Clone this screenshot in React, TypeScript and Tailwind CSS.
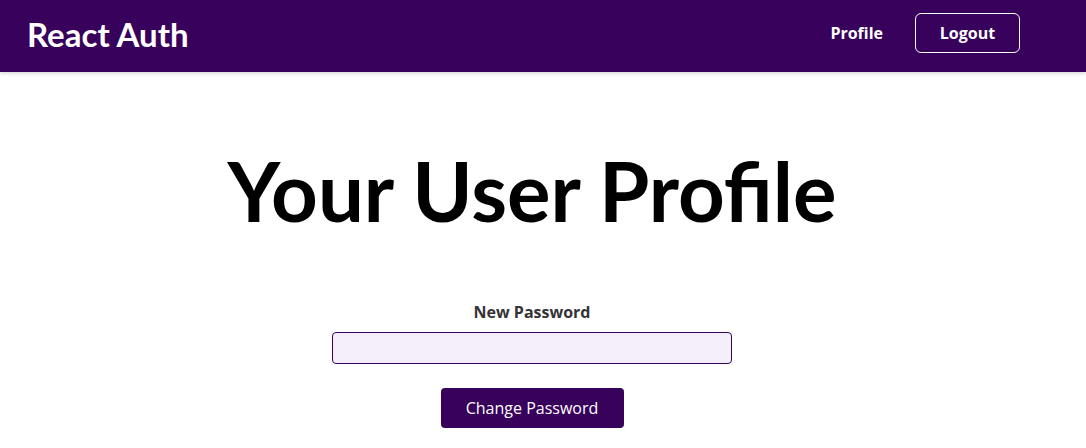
import { useState } from 'react';

export default function App() {
    const [password, setPassword] = useState('');

    return (
        <div className="min-h-screen bg-white font-['Open_Sans',sans-serif]">
            {/* Header */}
            <header className="flex h-[72px] w-full items-center justify-between bg-[#38015c] pl-[27px] pr-[66px] shadow-[0_1px_4px_rgba(0,0,0,0.2)]">
                <div className="mb-[2px] font-['Lato',sans-serif] text-[33px] font-bold text-white">React Auth</div>
                <nav className="mb-[6px]">
                    <ul className="flex items-center gap-8">
                        <li>
                            <a href="#" className="text-base font-bold text-white">
                                Profile
                            </a>
                        </li>
                        <li>
                            <button className="h-10 w-[105px] rounded-md border border-white bg-transparent text-base font-bold text-white">
                                Logout
                            </button>
                        </li>
                    </ul>
                </nav>
            </header>

            {/* Profile */}
            <main className="pr-[22px] text-center">
                <h1 className="mt-[71px] font-['Lato',sans-serif] text-[81.5px] leading-[96px] font-bold text-black">
                    Your User Profile
                </h1>
                <form className="mx-auto mt-[61px] w-[400px]" onSubmit={(e) => e.preventDefault()}>
                    <div className="flex flex-col items-center">
                        <label htmlFor="new-password" className="mb-[8px] text-base font-bold text-[#353336]">
                            New Password
                        </label>
                        <input
                            id="new-password"
                            type="password"
                            value={password}
                            onChange={(e) => setPassword(e.target.value)}
                            className="h-8 w-full rounded border border-[#38015c] bg-[#f5eefb]"
                        />
                    </div>
                    <button className="mt-6 h-10 w-[183px] rounded bg-[#38015c] text-base text-white">
                        Change Password
                    </button>
                </form>
            </main>
        </div>
    );
}
